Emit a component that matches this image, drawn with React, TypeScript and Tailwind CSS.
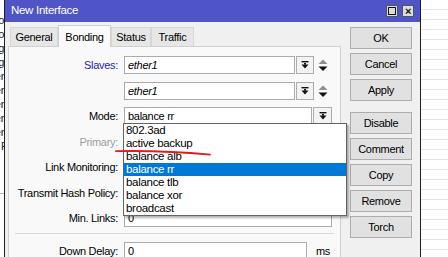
import type { ReactNode } from 'react';

type Row = {
  label: string;
  tone?: 'blue' | 'gray';
  value?: string;
  italic?: boolean;
  kind: 'slave' | 'combo' | 'plain';
  mt: string;
};

const rows: Row[] = [
  { label: 'Slaves:', tone: 'blue', value: 'ether1', italic: true, kind: 'slave', mt: 'mt-[9px]' },
  { label: '', value: 'ether1', italic: true, kind: 'slave', mt: 'mt-[8px]' },
  { label: 'Mode:', value: 'balance rr', kind: 'combo', mt: 'mt-[7px]' },
  { label: 'Primary:', tone: 'gray', kind: 'combo', mt: 'mt-[8px]' },
  { label: 'Link Monitoring:', kind: 'combo', mt: 'mt-[7px]' },
  { label: 'Transmit Hash Policy:', kind: 'combo', mt: 'mt-[8px]' },
  { label: 'Min. Links:', value: '0', kind: 'plain', mt: 'mt-[7px]' },
];

const modes = ['802.3ad', 'active backup', 'balance alb', 'balance rr', 'balance tlb', 'balance xor', 'broadcast'];

const tabs = [
  { name: 'General', width: 'w-[48px]' },
  { name: 'Bonding', width: 'w-[53px]', active: true },
  { name: 'Status', width: 'w-[40px]' },
  { name: 'Traffic', width: 'w-[43px]' },
];

const buttons = [
  { name: 'OK', className: 'mt-[5px] border-[#1c1c1c]' },
  { name: 'Cancel', className: 'mt-[4px]' },
  { name: 'Apply', className: 'mt-[4px]' },
  { name: 'Disable', className: 'mt-[11px]' },
  { name: 'Comment', className: 'mt-[4px]' },
  { name: 'Copy', className: 'mt-[4px]' },
  { name: 'Remove', className: 'mt-[4px]' },
  { name: 'Torch', className: 'mt-[4px]' },
];

function DropIcon() {
  return (
    <svg width="8" height="8" viewBox="0 0 8 8">
      <rect x="0.5" y="0" width="7" height="1.4" fill="#111" />
      <rect x="3" y="2" width="2" height="1.6" fill="#111" />
      <path d="M0.5 3.4 H7.5 L4 7.4 Z" fill="#111" />
    </svg>
  );
}

function Spinner() {
  return (
    <svg width="10" height="13" viewBox="0 0 10 13">
      <path d="M0.5 5 L5 0.5 L9.5 5 Z" fill="#8e8e8e" />
      <path d="M0.5 7.5 H9.5 L5 12 Z" fill="#111" />
    </svg>
  );
}

function Box({ width, children, italic }: { width: string; children?: ReactNode; italic?: boolean }) {
  return (
    <div className={`h-[18px] ${width} border border-[#ababab] bg-white pl-[3px] leading-[16px] ${italic ? 'italic' : ''}`}>
      {children}
    </div>
  );
}

function DropButton({ width }: { width: string }) {
  return (
    <div className={`ml-px flex h-[18px] ${width} items-center justify-center border border-[#adadad] bg-[#f3f3f3]`}>
      <DropIcon />
    </div>
  );
}

function FieldRow({ row }: { row: Row }) {
  const labelColor = row.tone === 'blue' ? 'text-[#2626a8]' : row.tone === 'gray' ? 'text-[#9c9c9c]' : 'text-black';
  return (
    <div className={`flex h-[18px] items-center ${row.mt}`}>
      <div className={`w-[110px] pr-px text-right ${labelColor}`}>{row.label}</div>
      <div className="ml-[5px] flex items-center">
        {row.kind === 'slave' && (
          <>
            <Box width="w-[171px]" italic={row.italic}>{row.value}</Box>
            <DropButton width="w-[18px]" />
            <div className="ml-[4px] flex items-center">
              <Spinner />
            </div>
          </>
        )}
        {row.kind === 'combo' && (
          <>
            <Box width="w-[188px]">{row.value}</Box>
            <DropButton width="w-[19px]" />
          </>
        )}
        {row.kind === 'plain' && <Box width="w-[208px]">{row.value}</Box>}
      </div>
    </div>
  );
}

function LeftStrip() {
  const frags = ['Info', 'Info', 'Bong', 'Bong', 'ether', 'ether', 'ether', 'ether', 'ether'];
  return (
    <div className="w-[4px] shrink-0 overflow-hidden bg-white">
      <div className="ml-[-40px] w-[44px] pt-[13px] text-right leading-[14px] text-[#222]">
        {frags.map((f, i) => (
          <div key={i} className={i === 2 || i === 3 ? 'underline' : ''}>
            {f}
          </div>
        ))}
        <div className="pl-[41px] text-left">F</div>
      </div>
      <div className="mt-[40px] border-t border-[#b5b5b5]" />
    </div>
  );
}

export default function App() {
  return (
    <div className="relative flex h-[257px] w-[448px] overflow-hidden bg-white font-['Liberation_Sans',Arial,sans-serif] text-[11px] tracking-[-0.3px] text-black">
      <LeftStrip />

      <div className="flex w-[417px] shrink-0 flex-col border-x border-[#1e1e1e]">
        <div className="flex h-[22px] shrink-0 items-center bg-[#4f54c7] pl-[6px] pr-[6px]">
          <span className="text-[11.5px] text-white">New Interface</span>
          <div className="ml-auto flex items-center gap-[4px]">
            <div className="flex h-[12px] w-[12px] items-center justify-center border border-[#555] bg-[#dcdcdc]">
              <div className="h-[8px] w-[8px] border border-[#111]" />
            </div>
            <div className="flex h-[12px] w-[12px] items-center justify-center border border-[#555] bg-[#dcdcdc] text-[11px] font-bold leading-none text-[#111]">
              ×
            </div>
          </div>
        </div>

        <div className="flex flex-1 bg-[#f0f0f0]">
          <div className="flex w-[345px] flex-col pl-[3px]">
            <div className="flex h-[24px] items-end pl-[2px]">
              {tabs.map((t) =>
                t.active ? (
                  <div
                    key={t.name}
                    className={`relative z-10 -mb-px flex h-[22px] ${t.width} items-start justify-center border border-b-0 border-[#d0d0d0] bg-[#f9f9f9] pt-[3px]`}
                  >
                    {t.name}
                  </div>
                ) : (
                  <div
                    key={t.name}
                    className={`flex h-[19px] ${t.width} items-center justify-center border border-b-0 border-[#d6d6d6] bg-[#e6e6e6]`}
                  >
                    {t.name}
                  </div>
                ),
              )}
            </div>

            <div className="flex-1 w-[333px] border border-[#d0d0d0] bg-[#f9f9f9]">
              {rows.map((r, i) => (
                <FieldRow key={i} row={r} />
              ))}
              <div className="mx-[6px] mt-[6px] border-t border-[#d8d8d8]" />
              <div className="mt-[8px] flex h-[18px] items-center">
                <div className="w-[110px] pr-px text-right">Down Delay:</div>
                <div className="ml-[5px] flex items-center">
                  <Box width="w-[183px]">0</Box>
                  <span className="ml-[9px]">ms</span>
                </div>
              </div>
            </div>
          </div>

          <div className="flex w-[62px] flex-col">
            {buttons.map((b) => (
              <div
                key={b.name}
                className={`flex h-[22px] items-center justify-center border border-[#adadad] bg-[#e1e1e1] ${b.className}`}
              >
                {b.name}
              </div>
            ))}
          </div>
        </div>
      </div>

      <div className="flex-1 bg-[repeating-linear-gradient(180deg,#ffffff_0px,#ffffff_9px,#e4e4e4_9px,#e4e4e4_10px)]" />

      <div className="absolute left-[123px] top-[123px] w-[224px] border border-[#646464] bg-white shadow-[2px_2px_2px_rgba(0,0,0,0.3)]">
        {modes.map((m) => (
          <div
            key={m}
            className={`h-[13px] pl-[2px] text-[11.5px] leading-[13px] ${m === 'balance rr' ? 'bg-[#0078d7] text-white' : 'text-black'}`}
          >
            {m}
          </div>
        ))}
      </div>

      <svg className="pointer-events-none absolute left-0 top-0" width="448" height="257" viewBox="0 0 448 257">
        <path d="M116 151.2 Q 162 150.2 210 154.6" fill="none" stroke="#e21b1b" strokeWidth="1.8" strokeLinecap="round" />
      </svg>
    </div>
  );
}
